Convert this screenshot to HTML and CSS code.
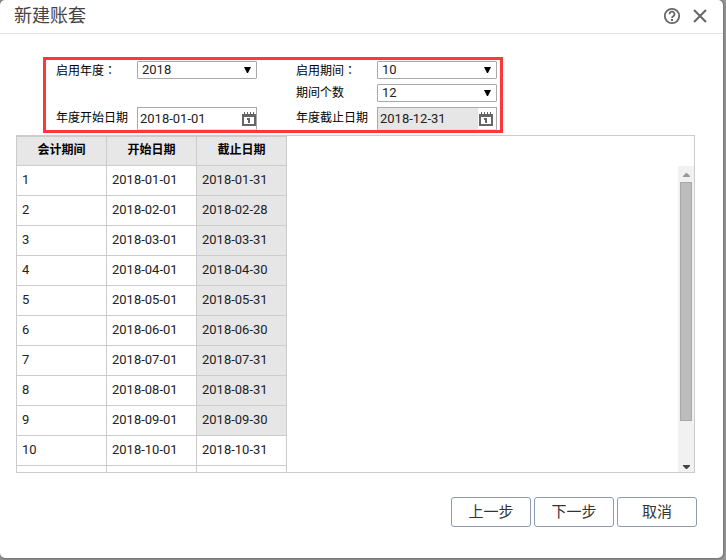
FILE: index.html
```html
<!DOCTYPE html>
<html lang="zh-CN">
<head>
<meta charset="utf-8">
<title>新建账套</title>
<link rel="stylesheet" href="styles.css">
</head>
<body>
<main class="dialog">
  <header class="dialog-header">
    <h1>新建账套</h1>
    <div class="tools">
      <button class="tool" type="button" aria-label="帮助"><svg width="18" height="18" viewBox="0 0 18 18"><circle cx="9" cy="9" r="7.2" fill="none" stroke="#666" stroke-width="1.8"/><path d="M6.500 7.200a2.500 2.500 0 1 1 3.700 2.100Q9 10 9 11" fill="none" stroke="#666" stroke-width="1.700"/><path d="M8 12h2v2H8z" fill="#666"/></svg></button>
      <button class="tool" type="button" aria-label="关闭"><svg width="18" height="18" viewBox="0 0 18 18"><path d="M3 3l12 12M15 3L3 15" fill="none" stroke="#666" stroke-width="2"/></svg></button>
    </div>
  </header>

  <form class="period-form">
    <label for="year">启用年度<span class="colon" lang="zh-TW">：</span></label>
    <select id="year"><option>2018</option></select>
    <label class="second" for="period">启用期间<span class="colon" lang="zh-TW">：</span></label>
    <select id="period"><option>10</option></select>

    <label class="second" for="count">期间个数</label>
    <select id="count"><option>12</option></select>

    <label class="date-label" for="start">年度开始日期</label>
    <div class="date">
      <input id="start" type="text" value="2018-01-01">
      <button type="button" aria-label="选择开始日期"><svg width="14" height="14" viewBox="0 0 14 14"><path d="M0 2h14v12H0zM2 5v7h10V5z" fill="#666" fill-rule="evenodd"/><path d="M2 0h1v2H2zM5 0h1v2H5zM8 0h1v2H8zM11 0h1v2h-1zM5 6h3v5H6V8H5z" fill="#666"/></svg></button>
    </div>
    <label class="second date-label" for="end">年度截止日期</label>
    <div class="date date-end">
      <input id="end" class="locked" type="text" value="2018-12-31" readonly>
      <button type="button" aria-label="选择截止日期"><svg width="14" height="14" viewBox="0 0 14 14"><path d="M0 2h14v12H0zM2 5v7h10V5z" fill="#666" fill-rule="evenodd"/><path d="M2 0h1v2H2zM5 0h1v2H5zM8 0h1v2H8zM11 0h1v2h-1zM5 6h3v5H6V8H5z" fill="#666"/></svg></button>
    </div>
  </form>

  <section class="panel">
    <table>
      <thead><tr><th>会计期间</th><th>开始日期</th><th>截止日期</th></tr></thead>
      <tbody>
        <tr><td>1</td><td>2018-01-01</td><td class="locked">2018-01-31</td></tr>
        <tr><td>2</td><td>2018-02-01</td><td class="locked">2018-02-28</td></tr>
        <tr><td>3</td><td>2018-03-01</td><td class="locked">2018-03-31</td></tr>
        <tr><td>4</td><td>2018-04-01</td><td class="locked">2018-04-30</td></tr>
        <tr><td>5</td><td>2018-05-01</td><td class="locked">2018-05-31</td></tr>
        <tr><td>6</td><td>2018-06-01</td><td class="locked">2018-06-30</td></tr>
        <tr><td>7</td><td>2018-07-01</td><td class="locked">2018-07-31</td></tr>
        <tr><td>8</td><td>2018-08-01</td><td class="locked">2018-08-31</td></tr>
        <tr><td>9</td><td>2018-09-01</td><td class="locked">2018-09-30</td></tr>
        <tr><td>10</td><td>2018-10-01</td><td>2018-10-31</td></tr>
        <tr class="partial"><td></td><td></td><td></td></tr>
      </tbody>
    </table>
    <div class="scrollbar" aria-hidden="true">
      <svg width="16" height="16" viewBox="0 0 16 16"><path d="M8 7h1l3 3v1H5v-1z" fill="#999"/></svg>
      <div class="track"><div class="thumb"></div></div>
      <svg width="16" height="12" viewBox="0 0 16 12"><path d="M5 5h7v1L9 9H8L5 6z" fill="#444"/></svg>
    </div>
  </section>

  <footer class="actions">
    <button type="button">上一步</button>
    <button type="button">下一步</button>
    <button type="button">取消</button>
  </footer>
</main>
</body>
</html>
```
FILE: styles.css
```css
* {
  box-sizing: border-box;
}

body {
  margin: 0;
  padding: 0 3px 2px 0;
  background: #969696;
  font-family: Roboto, "Noto Sans CJK SC", sans-serif;
  font-size: 13px;
  color: #000;
}

button {
  font-family: inherit;
  cursor: pointer;
}

.dialog {
  padding-bottom: 31px;
  background: #fff;
  border-radius: 5px;
  box-shadow: 0 0 3px #444;
}

.dialog-header {
  display: flex;
  align-items: center;
  justify-content: space-between;
  height: 34px;
  padding: 0 14px 2px;
  border-bottom: 1px solid #e4e4e4;
}

h1 {
  margin: 0;
  font-size: 18px;
  line-height: 30px;
  font-weight: 400;
  color: #444;
}

.tools {
  display: flex;
  gap: 10px;
}

.tool {
  display: flex;
  padding: 0;
  border: 0;
  background: none;
}

.period-form {
  display: grid;
  grid-template-columns: 81px 120px 120px 120px;
  grid-template-rows: 18px 18px 23px;
  row-gap: 5px;
  width: 460px;
  margin: 23px 0 0 43px;
  padding: 1px 0 0 10px;
  border: 3px solid #fb3939;
}

.period-form label {
  font-size: 12px;
  line-height: 18px;
}

.period-form .date-label {
  line-height: 22px;
}

.period-form .second {
  grid-column: 3;
  padding-left: 39px;
}

.colon {
  font-family: "Noto Sans CJK TC", sans-serif;
}

select {
  width: 100%;
  padding: 0 20px 0 4px;
  border: 1px solid #a9a9a9;
  border-radius: 1px;
  appearance: none;
  background: #fff url("data:image/svg+xml,%3Csvg xmlns='http://www.w3.org/2000/svg' width='7' height='6'%3E%3Cpath d='M0 0h7L4 6H3z'/%3E%3C/svg%3E") no-repeat right 5px center;
  font: inherit;
  line-height: 16px;
  color: #222;
}

.date {
  display: flex;
  border: 1px solid #a9a9a9;
  border-bottom-color: #ddd;
}

.date input {
  flex: 1;
  min-width: 0;
  padding: 0 2px;
  border: 0;
  font: inherit;
  color: #222;
}

.date button {
  display: flex;
  align-items: center;
  padding: 0;
  border: 0;
  background: #fff;
}

.date-end button {
  padding: 0 3px 0 1px;
}

.date .locked,
td.locked {
  background: #e6e6e6;
}

.panel {
  display: flex;
  justify-content: space-between;
  margin: 2px 28px 0 16px;
  border: 1px solid #ccc;
}

table {
  width: 270px;
  table-layout: fixed;
  border-spacing: 0;
}

th,
td {
  height: 30px;
  padding: 0 5px;
  border-right: 1px solid #ccc;
  border-bottom: 1px solid #ccc;
  text-align: left;
  line-height: 16px;
}

th {
  padding-bottom: 2px;
  border-top: 1px solid #ccc;
  background: #e7e7e7;
  font-size: 12px;
  text-align: center;
}

td {
  padding-bottom: 2px;
  color: #222;
}

.partial td {
  height: 6px;
  padding: 0;
  border-bottom: 0;
}

.scrollbar {
  display: flex;
  flex-direction: column;
  width: 16px;
  margin-top: 30px;
  background: #f1f1f1;
}

.track {
  flex: 1;
  padding: 0 2px;
}

.thumb {
  height: 86%;
  min-height: 239px;
  border: 1px solid #a8a8a8;
  background: #bcbcbc;
}

.actions {
  display: flex;
  justify-content: flex-end;
  gap: 3px;
  padding: 24px 26px 0 0;
}

.actions button {
  width: 80px;
  height: 30px;
  padding: 0 0 4px;
  border: 1px solid #8b9bb0;
  border-radius: 3px;
  background: #fff;
  font-size: 15px;
  color: #333;
}
```
